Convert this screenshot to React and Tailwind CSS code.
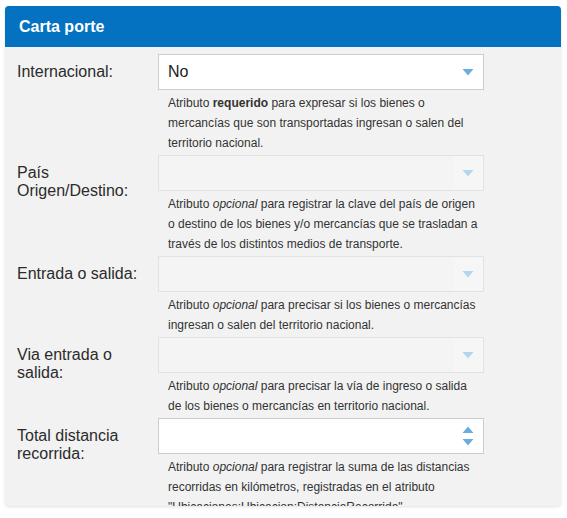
import React from "react";

const ArrowDown = ({ light }) => (
  <svg width="12" height="7" viewBox="0 0 12 7" className="block">
    <path d="M0.5 0 L11.5 0 L6 6.5 Z" fill={light ? "#b3d6ee" : "#6aaee0"} />
  </svg>
);

const ArrowUp = () => (
  <svg width="12" height="7" viewBox="0 0 12 7" className="block">
    <path d="M0.5 7 L11.5 7 L6 0.5 Z" fill="#6aaee0" />
  </svg>
);

const Field = ({ label, children, help }) => (
  <div className="flex">
    <div className="w-[153px] shrink-0 pl-[12px] pt-[9px] pr-[13px] text-[16px] leading-[18px] text-[#2b2b2b]">{label}</div>
    <div className="w-[326px] shrink-0">
      {children}
      <div className="mt-[3px] pl-[10px] text-[12px] leading-[20px] text-[#333]">
        {help.map((line, i) => (
          <div key={i} className="whitespace-nowrap">{line}</div>
        ))}
      </div>
    </div>
  </div>
);

const Select = ({ value, disabled }) => (
  <div className={`h-[36px] flex items-center border ${disabled ? "border-[#e2e2e2] bg-[#f4f4f4]" : "border-[#cccccc] bg-white"}`}>
    <div className="flex-1 pl-[9px] text-[16px] text-[#222]">{value}</div>
    <div className={`h-full w-[30px] flex items-center justify-center ${disabled ? "bg-[#f6f6f6]" : ""}`}>
      <ArrowDown light={disabled} />
    </div>
  </div>
);

const NumberInput = () => (
  <div className="h-[36px] flex items-center border border-[#cccccc] bg-white">
    <div className="flex-1" />
    <div className="w-[30px] flex flex-col items-center gap-[6px]">
      <ArrowUp />
      <ArrowDown />
    </div>
  </div>
);

export default function App() {
  return (
    <div className="min-h-screen bg-white pt-[6px] pl-[5px] font-['Liberation_Sans',Arial,sans-serif]">
      <div className="w-[556px] h-[500px] overflow-hidden rounded-[4px] bg-[#f2f2f2] shadow-[0_1px_3px_rgba(0,0,0,0.12)]">
        <div className="h-[41px] bg-[#0572c1] pl-[14px] flex items-center text-[16px] font-bold text-white">Carta porte</div>
        <div className="pt-[7px] flex flex-col gap-[2px]">
          <Field
            label="Internacional:"
            help={[
              <>Atributo <b>requerido</b> para expresar si los bienes o</>,
              "mercancías que son transportadas ingresan o salen del",
              "territorio nacional.",
            ]}
          >
            <Select value="No" />
          </Field>
          <Field
            label="País Origen/Destino:"
            help={[
              <>Atributo <i>opcional</i> para registrar la clave del país de origen</>,
              "o destino de los bienes y/o mercancías que se trasladan a",
              "través de los distintos medios de transporte.",
            ]}
          >
            <Select disabled />
          </Field>
          <Field
            label="Entrada o salida:"
            help={[
              <>Atributo <i>opcional</i> para precisar si los bienes o mercancías</>,
              "ingresan o salen del territorio nacional.",
            ]}
          >
            <Select disabled />
          </Field>
          <Field
            label="Via entrada o salida:"
            help={[
              <>Atributo <i>opcional</i> para precisar la vía de ingreso o salida</>,
              "de los bienes o mercancías en territorio nacional.",
            ]}
          >
            <Select disabled />
          </Field>
          <Field
            label="Total distancia recorrida:"
            help={[
              <>Atributo <i>opcional</i> para registrar la suma de las distancias</>,
              "recorridas en kilómetros, registradas en el atributo",
              "\"Ubicaciones:Ubicacion:DistanciaRecorrida\"",
            ]}
          >
            <NumberInput />
          </Field>
        </div>
      </div>
    </div>
  );
}
